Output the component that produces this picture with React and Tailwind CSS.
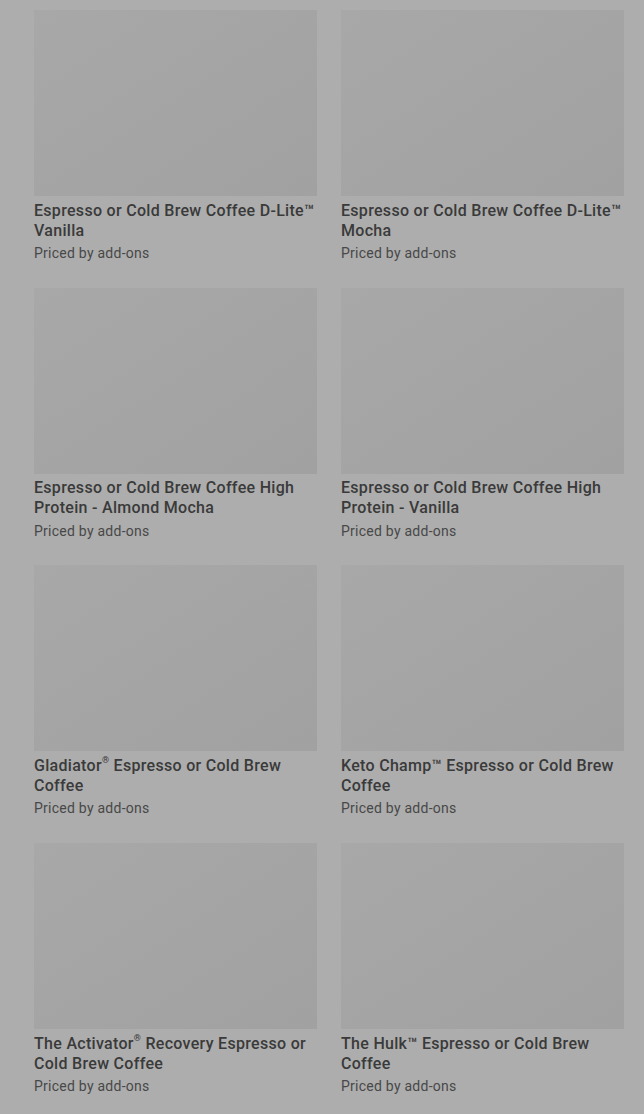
import React from "react";

const items = [
    "Espresso or Cold Brew Coffee D-Lite™ Vanilla",
    "Espresso or Cold Brew Coffee D-Lite™ Mocha",
    "Espresso or Cold Brew Coffee High Protein - Almond Mocha",
    "Espresso or Cold Brew Coffee High Protein - Vanilla",
    "Gladiator® Espresso or Cold Brew Coffee",
    "Keto Champ™ Espresso or Cold Brew Coffee",
    "The Activator® Recovery Espresso or Cold Brew Coffee",
    "The Hulk™ Espresso or Cold Brew Coffee",
];

// Render ® as a small raised mark like the menu does
const renderName = (name) =>
    name.split("®").map((part, i, arr) => (
        <React.Fragment key={i}>
            {part}
            {i < arr.length - 1 && <span className="text-[9px] leading-none align-top">®</span>}
        </React.Fragment>
    ));

const App = () => {
    return (
        <div className="min-h-screen bg-[#adadad] pt-[10px] pl-[34px] pr-[20px] font-['Roboto',sans-serif]">
            {/* Product grid */}
            <div className="grid grid-cols-2 gap-x-[24px] gap-y-[24.7px]">
                {items.map((name, index) => (
                    <div key={index} className="flex flex-col">
                        <div className="h-[186px] bg-gradient-to-br from-[#a8a8a8] to-[#a1a1a1]"></div>
                        <h3 className="mt-[4.5px] text-[16px] leading-[20px] font-medium tracking-[0.3px] text-[#3a3a3a] min-h-[40px]">
                            {renderName(name)}
                        </h3>
                        <p className="mt-[2.5px] text-[14px] leading-[20px] tracking-[0.25px] text-[#484848]">Priced by add-ons</p>
                    </div>
                ))}
            </div>
        </div>
    );
};

export default App;
